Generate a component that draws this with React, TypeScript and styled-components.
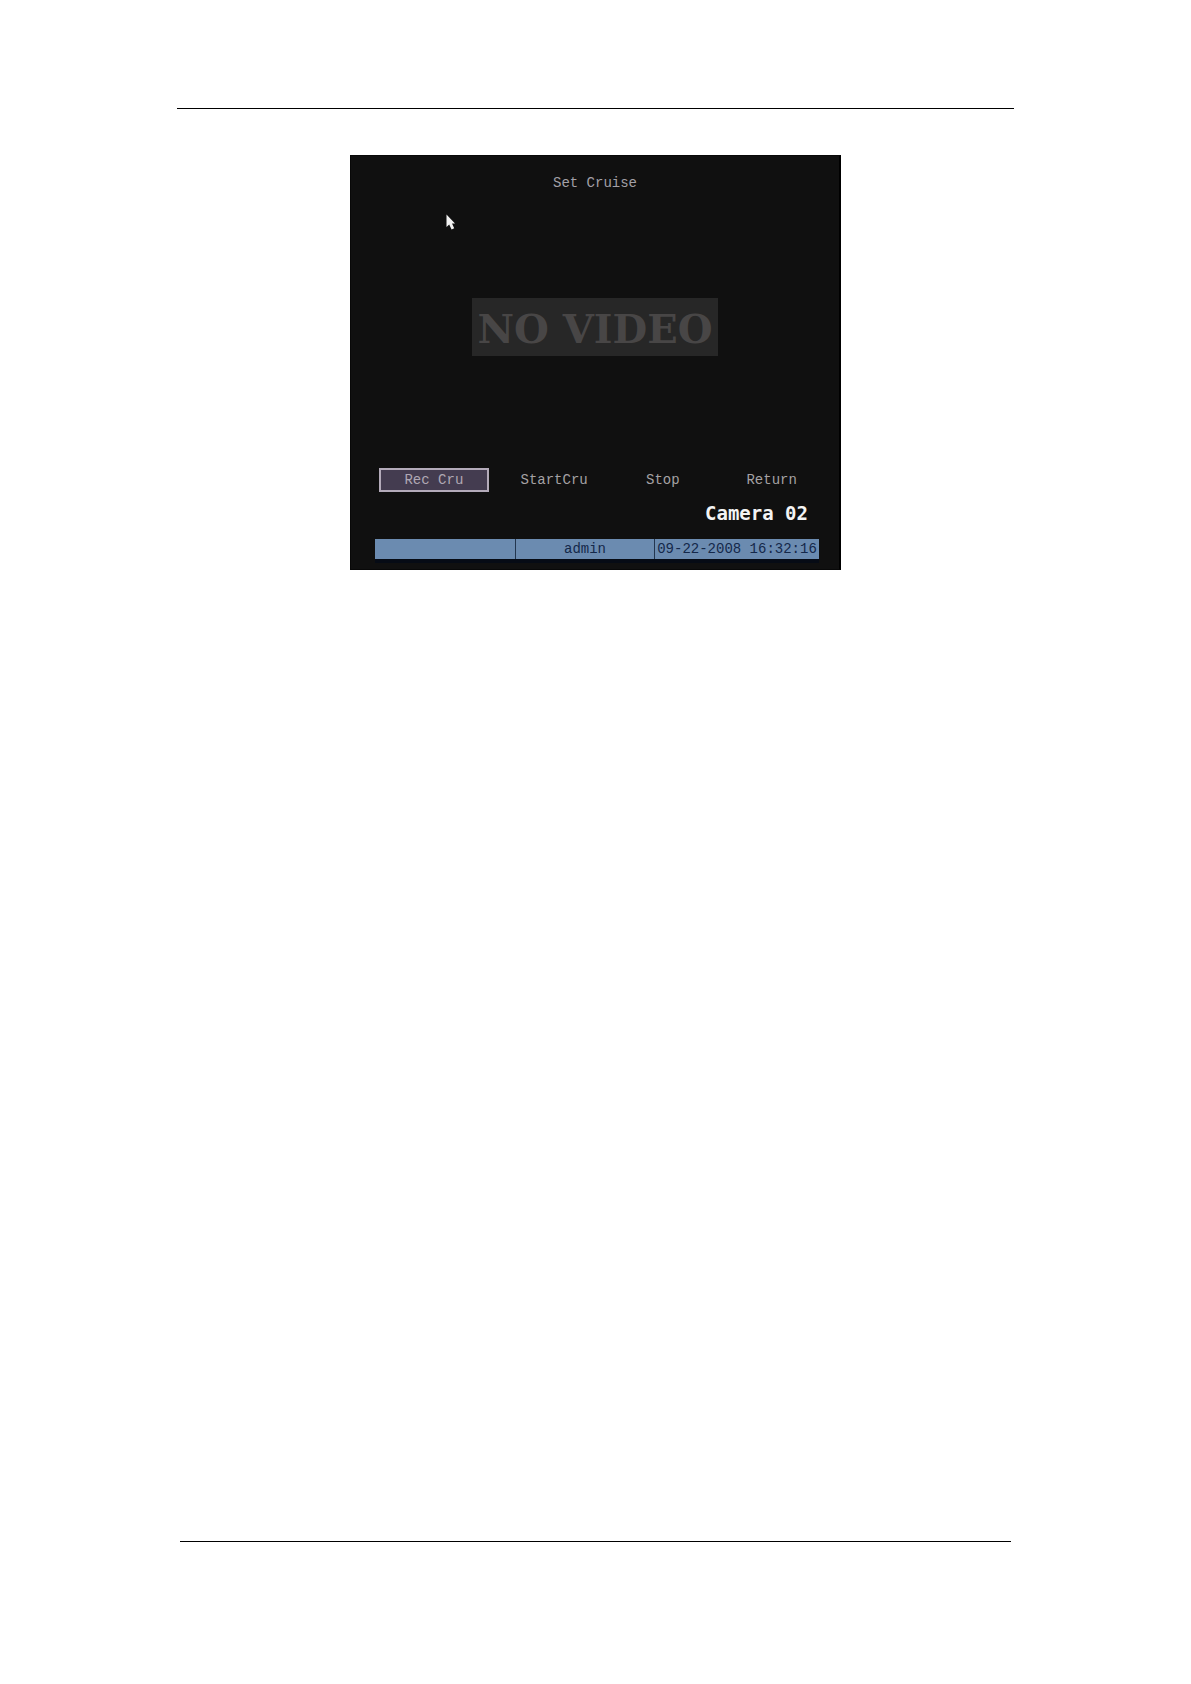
import React from 'react';
import styled, { createGlobalStyle } from 'styled-components';

const GlobalStyle = createGlobalStyle`
  * {
    box-sizing: border-box;
  }

  body {
    margin: 0;
    background: #fff;
    font-family: 'Liberation Mono', 'Courier New', monospace;
    font-size: 14px;
    line-height: 20px;
  }
`;

const Page = styled.div`
  min-height: 100vh;
  padding: 108px 177px 142px;
  display: flex;
  flex-direction: column;
  justify-content: space-between;
`;

const Rule = styled.hr<{ $inset?: number }>`
  width: auto;
  margin: 0 ${({ $inset = 0 }) => $inset}px;
  border: 0;
  border-top: 1px solid #000;
`;

const Screen = styled.main`
  position: relative;
  width: 100%;
  max-width: 491px;
  margin: 46px auto 0;
  padding: 17px 0 10px;
  display: flex;
  flex-direction: column;
  background: #101010;
  border: 1px solid #080808;
  border-right: 2px solid #000;
`;

const Title = styled.h1`
  margin: 0;
  color: #a3a0a7;
  font-size: 14px;
  font-weight: 400;
  text-align: center;
`;

const Pointer = styled.svg`
  position: absolute;
  top: 57px;
  left: 94px;
  width: 11px;
  height: 18px;
`;

const NoVideo = styled.div`
  align-self: center;
  width: 246px;
  margin-top: 105px;
  padding-top: 4px;
  background: #272727;
  color: #484646;
  font-family: 'DejaVu Serif', serif;
  font-size: 40px;
  font-weight: 700;
  line-height: 54px;
  text-align: center;
  white-space: nowrap;
`;

const Actions = styled.div`
  margin-top: 112px;
  padding: 0 2px 0 28px;
  display: grid;
  grid-template-columns: 110fr 131fr 87fr 131fr;
`;

const ActionButton = styled.button<{ $active?: boolean }>`
  height: 24px;
  padding: 0;
  border: 2px solid ${({ $active }) => ($active ? '#b4abba' : 'transparent')};
  background: ${({ $active }) => ($active ? '#443c50' : 'transparent')};
  color: ${({ $active }) => ($active ? '#b0a8b4' : '#a5a2a4')};
  font: inherit;
  cursor: pointer;
`;

const CameraName = styled.div`
  margin-top: 9px;
  padding-right: 31px;
  color: #f4f4f4;
  font-family: 'DejaVu Sans Mono', monospace;
  font-size: 19px;
  font-weight: 700;
  line-height: 24px;
  text-align: right;
`;

const StatusBar = styled.footer`
  margin: 14px 20px 0 24px;
  display: grid;
  grid-template-columns: 140fr 139fr 165fr;
  background: #6b8bb0;
  box-shadow: 0 4px 0 #060b15;
`;

const StatusCell = styled.div`
  height: 20px;
  color: #14284a;
  text-align: center;
  white-space: nowrap;

  & + & {
    border-left: 1px solid #23364f;
  }
`;

const actions = ['Rec Cru', 'StartCru', 'Stop', 'Return'];

const App: React.FC = () => {
  return (
    <>
      <GlobalStyle />
      <Page>
        <div>
          <Rule />
          <Screen>
            <Title>Set Cruise</Title>
            <Pointer viewBox="0 0 11 18" aria-hidden="true">
              <path
                d="M1.5 1.5V14L4.2 11.6L6.6 16.5L9.2 15.3L7 10.6H10L1.5 1.5Z"
                fill="#f2f2f2"
              />
            </Pointer>
            <NoVideo>NO VIDEO</NoVideo>
            <Actions>
              {actions.map((label, index) => (
                <ActionButton key={label} type="button" $active={index === 0}>
                  {label}
                </ActionButton>
              ))}
            </Actions>
            <CameraName>Camera 02</CameraName>
            <StatusBar>
              <StatusCell />
              <StatusCell>admin</StatusCell>
              <StatusCell>09-22-2008 16:32:16</StatusCell>
            </StatusBar>
          </Screen>
        </div>
        <Rule $inset={3} />
      </Page>
    </>
  );
};

export default App;
